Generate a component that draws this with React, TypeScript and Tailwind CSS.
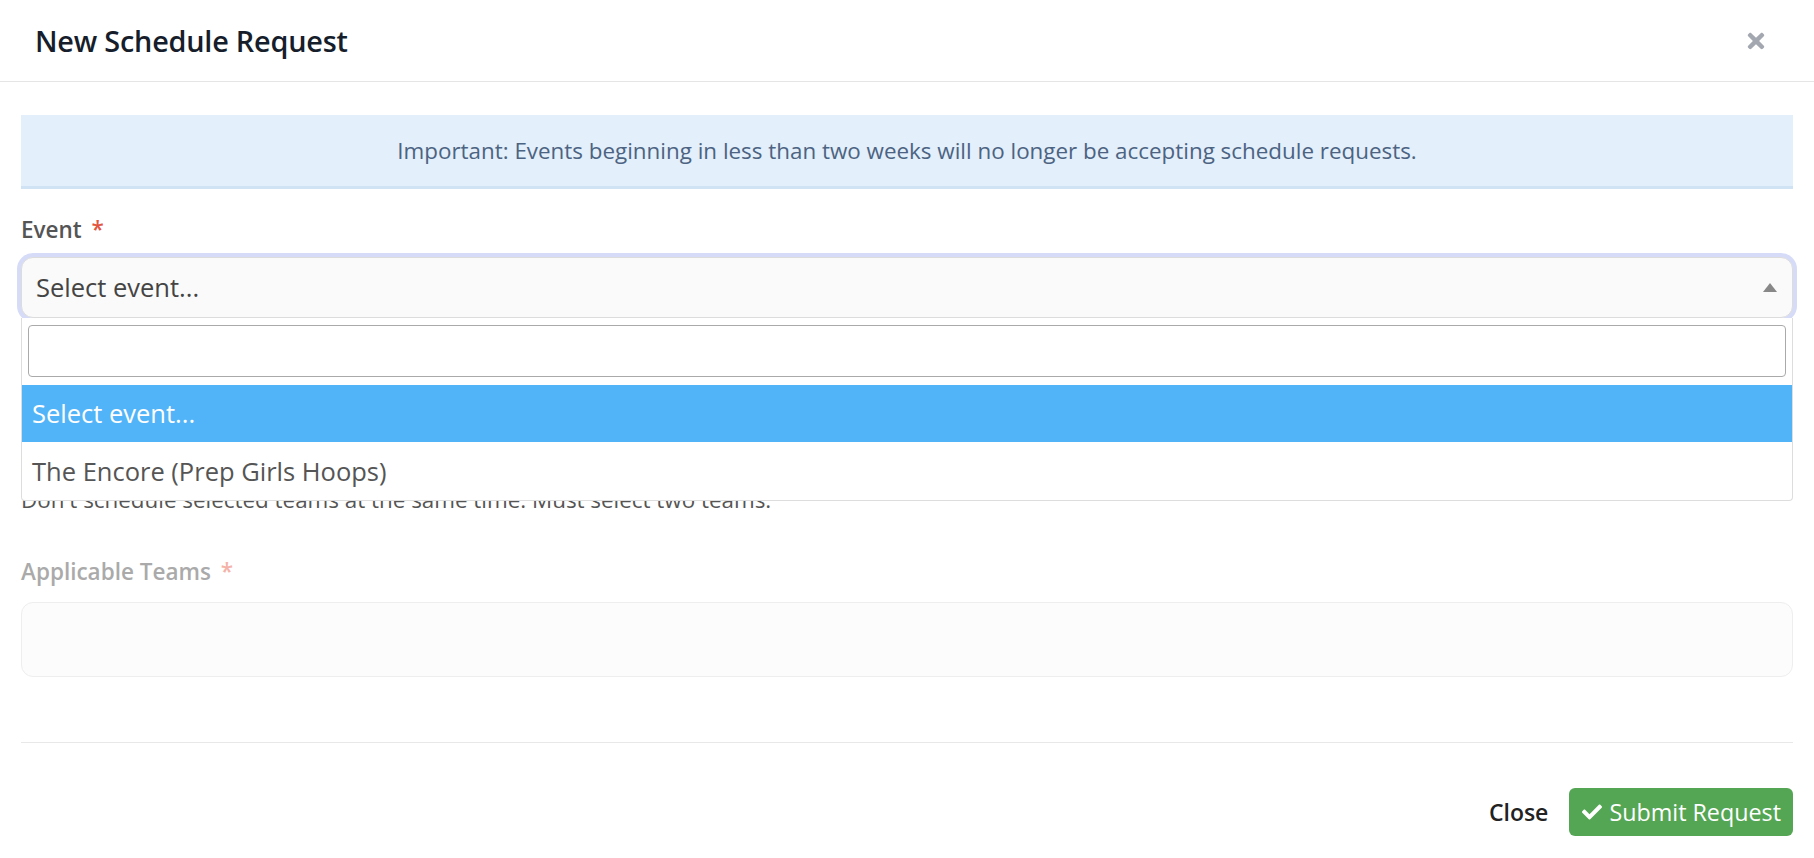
import React from 'react';
import { FaTimes, FaCheck } from 'react-icons/fa';

export default function App() {
  return (
    <div className="min-h-screen bg-white font-['Open_Sans',sans-serif] text-[#555]">
      {/* Header */}
      <header className="h-[82px] flex items-center justify-between pl-[35px] pr-[46px] border-b border-[#e5e5e5]">
        <h1 className="text-[28.8px] leading-[36px] font-semibold text-[#161d2b] tracking-[-0.2px]">New Schedule Request</h1>
        <button type="button" className="text-[#a3a8b0]">
          <FaTimes size={24} />
        </button>
      </header>

      {/* Body */}
      <div className="px-[21px]">
        <div className="mt-[33px] h-[74px] bg-[#e3effa] border-b-[3px] border-[#d0e3f5] flex items-center justify-center text-[22.4px] text-[#4c6382]">
          Important: Events beginning in less than two weeks will no longer be accepting schedule requests.
        </div>

        {/* Event field */}
        <div className="mt-[26px]">
          <label className="block text-[22.5px] leading-[30px] font-semibold text-[#555]">
            Event <span className="ml-[4px] text-[#e2553f]">*</span>
          </label>
          <div className="relative mt-[12px] z-10">
            <div className="h-[61px] rounded-xl bg-[#fafafa] border border-[#dcdcdc] ring-4 ring-[#d6dcf8] flex items-center justify-between pl-[14px] pr-[15px]">
              <span className="text-[25.5px] text-[#444]">Select event...</span>
              <svg width="14" height="9" viewBox="0 0 14 9" className="text-[#888]">
                <path d="M7 0 L14 9 L0 9 Z" fill="currentColor" />
              </svg>
            </div>
            <div className="absolute left-0 right-0 top-full bg-white border border-[#dddddd] border-t-0 rounded-b-[4px] px-[6px] pt-[7px]">
              <div className="h-[52px] rounded-[4px] border border-[#aaaaaa] bg-white" />
              <div className="-mx-[6px] mt-[8px]">
                <div className="h-[57px] bg-[#52b4f8] text-white text-[25.5px] flex items-center pl-[10px]">Select event...</div>
                <div className="h-[58px] text-[#555] text-[25.5px] flex items-center pl-[10px]">The Encore (Prep Girls Hoops)</div>
              </div>
            </div>
          </div>
        </div>

        {/* Request type field, covered by the open dropdown */}
        <div className="mt-[85px]">
          <div className="h-[61px] rounded-xl bg-[#fafafa] border border-[#dcdcdc]" />
          <p className="mt-[22px] text-[22.4px] leading-[28px] text-[#555]">
            Don't schedule selected teams at the same time. Must select two teams.
          </p>
        </div>

        {/* Applicable teams */}
        <div className="mt-[43px] pb-[65px]">
          <label className="block text-[22.5px] leading-[30px] font-semibold text-[#aaa]">
            Applicable Teams <span className="ml-[4px] text-[#f4b2a8]">*</span>
          </label>
          <div className="mt-[15px] h-[75px] rounded-xl bg-[#fcfcfc] border border-[#eeeeee]" />
        </div>
      </div>

      {/* Footer */}
      <footer className="mx-[21px] border-t border-[#e8e8e8] pt-[45px] pb-[23px] flex items-center justify-end gap-[21px]">
        <button type="button" className="text-[23px] font-semibold text-[#222]">Close</button>
        <button type="button" className="h-[48px] pl-[13px] pr-[12px] rounded-[6px] bg-[#54a654] text-white text-[23.3px] flex items-center gap-[7px]">
          <FaCheck size={20} />
          Submit Request
        </button>
      </footer>
    </div>
  );
}
